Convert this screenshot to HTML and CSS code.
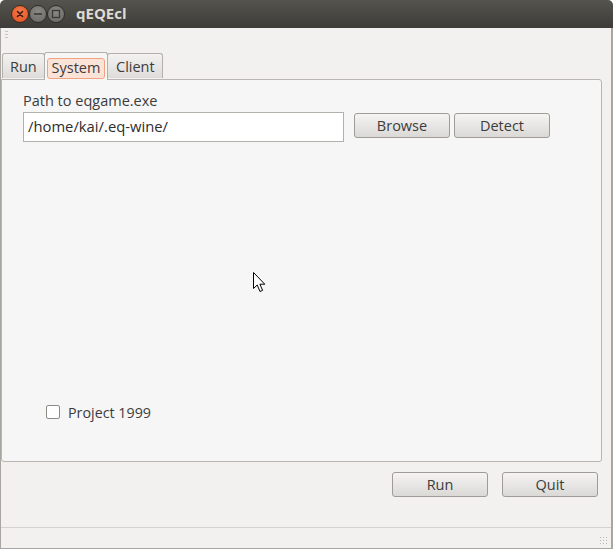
FILE: index.html
```html
<!DOCTYPE html>
<html>
<head>
<meta charset="utf-8">
<link rel="stylesheet" href="styles.css">
</head>
<body>
<div class="window">
  <div class="titlebar">
    <div class="wbtns">
      <span class="wbtn close"><svg width="18" height="18" viewBox="0 0 18 18"><path d="M6.5 6.5 L11.5 11.5 M11.5 6.5 L6.5 11.5" stroke="#3a1a10" stroke-width="1.6" stroke-linecap="round"/></svg></span>
      <span class="wbtn"><svg width="18" height="18" viewBox="0 0 18 18"><path d="M5 9 H13" stroke="#3a3936" stroke-width="1.6"/></svg></span>
      <span class="wbtn"><svg width="18" height="18" viewBox="0 0 18 18"><rect x="5.5" y="5.5" width="7" height="7" fill="none" stroke="#3a3936" stroke-width="1.3"/></svg></span>
    </div>
    <span class="title">qEQEcl</span>
  </div>
  <div class="body">
    <div class="toolbar"><span class="handle"></span></div>
    <div class="tabs">
      <div class="tab">Run</div>
      <div class="tab active"><span class="focus">System</span></div>
      <div class="tab">Client</div>
    </div>
    <div class="panel">
      <div class="label">Path to eqgame.exe</div>
      <div class="pathrow">
        <div class="input">/home/kai/.eq-wine/</div>
        <button class="btn">Browse</button>
        <button class="btn">Detect</button>
      </div>
      <div class="spacer"></div>
      <label class="check"><span class="box"></span>Project 1999</label>
    </div>
    <div class="actions">
      <button class="btn">Run</button>
      <button class="btn">Quit</button>
    </div>
    <div class="statusbar"><span class="grip"></span></div>
  </div>
  <svg class="cursor" width="13" height="21" viewBox="0 0 13 21"><path d="M0.5 0.5 L0.5 16.5 L4.2 13 L7 19.5 L9.6 18.4 L6.9 12.2 L11.8 12.2 Z" fill="#fff" stroke="#000" stroke-width="1" stroke-linejoin="round"/></svg>
</div>
</body>
</html>
```
FILE: styles.css
```css
* { box-sizing: border-box; }
html, body { margin: 0; padding: 0; background: #ffffff; }
body { font-family: "Open Sans", "DejaVu Sans", sans-serif; font-size: 14px; color: #3c3c3c; }
.window {
  position: relative;
  width: 613px; height: 549px;
  display: flex; flex-direction: column;
}
.titlebar {
  height: 28px;
  background: linear-gradient(#55534d, #3d3c38);
  border-radius: 5px 5px 0 0;
  display: flex; align-items: center;
  padding-left: 11px;
}
.wbtns { display: flex; gap: 0; }
.wbtn {
  width: 18px; height: 18px; border-radius: 50%;
  background: radial-gradient(circle at 50% 35%, #8a8883, #6a6863);
  border: 1px solid #2f2e2b;
  display: flex; align-items: center; justify-content: center;
}
.wbtn svg { display: block; margin: -1px; }
.wbtn.close { background: radial-gradient(circle at 50% 35%, #f47a4b, #e0501f); border-color: #3a2a20; }
.title {
  margin-left: 11px;
  font-weight: 700; font-size: 15px; color: #dfdbd2;
  font-family: "Open Sans", sans-serif;
  margin-top: -2px;
}
.body {
  flex: 1;
  background: #f2f1f0;
  border-left: 1px solid #a9a6a2;
  border-right: 2px solid #a9a6a2;
  border-bottom: 1px solid #a9a6a2;
  display: flex; flex-direction: column;
}
.toolbar { height: 23px; padding: 3px 0 0 4px; }
.handle {
  display: block; width: 3px; height: 9px;
  background: repeating-linear-gradient(#c8c5c1 0 1px, transparent 1px 3px);
}
.tabs {
  height: 28px; display: flex; align-items: flex-end;
  padding-left: 1px; position: relative; z-index: 1;
}
.tab {
  height: 25px; padding: 0 7px;
  display: flex; align-items: center;
  background: linear-gradient(#f3f2f1, #dedcd9);
  border: 1px solid #b3b0ac; border-bottom: none;
  border-radius: 3px 3px 0 0;
  font-size: 14.5px; color: #3c3c3c;
  margin-bottom: 1px;
}
.tab:first-child { width: 43px; }
.tab.active {
  height: 28px; background: #f6f6f5; margin-bottom: -1px;
  padding: 0 2px; width: 64px; margin-left: -1px; margin-right: -1px;
  align-items: flex-start; padding-top: 5px;
}
.tab:last-child { width: 56px; padding-left: 8px; }
.focus {
  display: block; width: 58px; height: 21px;
  background: #fce3d8; border: 1px solid #f2a283; border-radius: 3px;
  text-align: center; line-height: 18px;
}
.panel {
  height: 383px;
  margin: 0 9px 0 0;
  background: #f6f6f6;
  border: 1px solid #b9b6b2; border-radius: 0 3px 3px 3px;
  padding: 12px 0 0 21px;
  display: flex; flex-direction: column;
}
.label { font-size: 14.5px; line-height: 18px; height: 20px; }
.pathrow { display: flex; align-items: flex-start; margin-top: 0; }
.input {
  width: 321px; height: 30px;
  background: #fff; border: 1px solid #b4b1ac;
  padding: 0 4px; font-size: 14.8px; line-height: 27px; color: #2d2d2d;
  margin-right: 10px;
}
.btn {
  width: 96px; height: 25px; margin-top: 1px;
  background: linear-gradient(#f5f4f3, #dbd9d6);
  border: 1px solid #9f9c97; border-radius: 3px;
  font-family: inherit; font-size: 14.5px; color: #3c3c3c;
  padding: 0; margin-right: 4px;
}
.spacer { flex: 1; }
.check {
  display: flex; align-items: center; margin: 0 0 41px 23px;
  font-size: 14.3px; height: 16px;
}
.box {
  width: 14px; height: 14px; background: #fff;
  border: 1px solid #8f8c88; border-radius: 2px; margin-right: 8px;
}
.actions {
  height: 65px; display: flex; justify-content: flex-end; align-items: flex-start;
  padding: 10px 13px 0 0; gap: 14px;
}
.actions .btn { margin: 0; }
.statusbar {
  flex: 1; border-top: 1px solid #d4d2ce; position: relative;
}
.grip {
  position: absolute; right: 2px; bottom: 2px; width: 10px; height: 10px;
  background: radial-gradient(circle, #b9b6b2 0.6px, transparent 0.9px) 0 0 / 3px 3px;
}
.cursor { position: absolute; left: 253px; top: 272px; }
```
